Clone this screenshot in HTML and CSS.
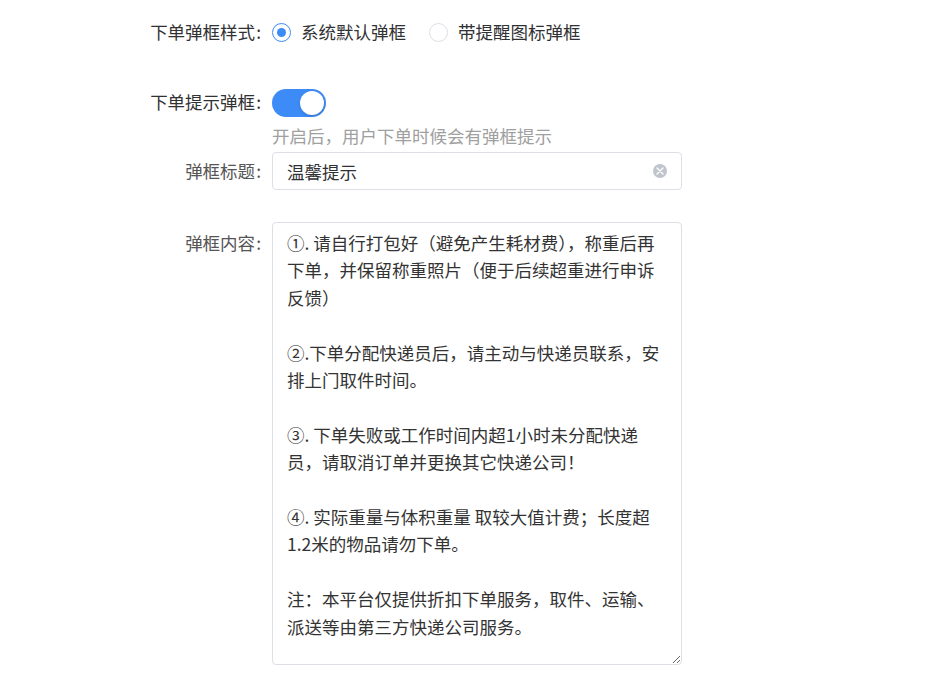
FILE: index.html
```html
<!DOCTYPE html>
<html lang="zh-CN">
<head>
    <meta charset="UTF-8">
    <meta name="viewport" content="width=device-width, initial-scale=1.0">
    <title>下单弹框设置</title>
    <link rel="stylesheet" href="styles.css">
</head>
<body>
    <div class="form">
        <div class="form-item item-style">
            <label class="label">下单弹框样式<span class="colon">:</span></label>
            <div class="content">
                <label class="radio checked"><span class="radio-dot"></span><span class="radio-text">系统默认弹框</span></label>
                <label class="radio"><span class="radio-dot"></span><span class="radio-text">带提醒图标弹框</span></label>
            </div>
        </div>

        <div class="form-item item-switch">
            <label class="label">下单提示弹框<span class="colon">:</span></label>
            <div class="content">
                <div class="switch-row">
                    <span class="switch on"><span class="switch-knob"></span></span>
                </div>
                <div class="tip">开启后，用户下单时候会有弹框提示</div>
            </div>
        </div>

        <div class="form-item item-title">
            <label class="label light">弹框标题<span class="colon">:</span></label>
            <div class="content">
                <div class="input-wrap">
                    <input class="input" type="text" value="温馨提示">
                    <span class="clear-icon">
                        <svg width="8" height="8" viewBox="0 0 8 8"><path d="M1 1L7 7M7 1L1 7" stroke="#fff" stroke-width="1.4" stroke-linecap="round"/></svg>
                    </span>
                </div>
            </div>
        </div>

        <div class="form-item item-body">
            <label class="label light">弹框内容<span class="colon">:</span></label>
            <div class="content">
                <textarea class="textarea">①. 请自行打包好（避免产生耗材费），称重后再
下单，并保留称重照片（便于后续超重进行申诉
反馈）

②.下单分配快递员后，请主动与快递员联系，安
排上门取件时间。

③. 下单失败或工作时间内超1小时未分配快递
员，请取消订单并更换其它快递公司！

④. 实际重量与体积重量 取较大值计费；长度超
1.2米的物品请勿下单。

注：本平台仅提供折扣下单服务，取件、运输、
派送等由第三方快递公司服务。</textarea>
            </div>
        </div>
    </div>
</body>
</html>
```

FILE: styles.css
```css
body {
    margin: 0;
    padding: 0;
    background: #fff;
    font-family: "Noto Sans CJK SC", "Noto Sans", sans-serif;
    font-size: 17.5px;
    color: #303133;
}
.form {
    padding-top: 12px;
}
.form-item {
    display: flex;
    align-items: flex-start;
}
.label {
    width: 272px;
    flex-shrink: 0;
    box-sizing: border-box;
    padding-right: 8px;
    text-align: right;
    line-height: 40px;
    color: #303133;
}
.label.light {
    color: #555;
}
.colon {
    margin-left: 1px;
    margin-right: 3px;
}
.content {
    line-height: 40px;
}

/* 样式单选 */
.item-style {
    margin-bottom: 30px;
}
.radio {
    display: inline-flex;
    align-items: center;
    margin-right: 19px;
    cursor: pointer;
    vertical-align: top;
    height: 40px;
}
.radio-dot {
    width: 19px;
    height: 19px;
    box-sizing: border-box;
    border: 1px solid #dcdfe6;
    border-radius: 50%;
    margin-right: 10px;
    position: relative;
}
.radio.checked .radio-dot {
    border: 1.5px solid #3d8bf7;
}
.radio.checked .radio-dot::after {
    content: "";
    position: absolute;
    left: 50%;
    top: 50%;
    width: 9px;
    height: 9px;
    margin: -4.5px 0 0 -4.5px;
    border-radius: 50%;
    background: #3d8bf7;
}
.radio-text {
    color: #303133;
}

/* 开关 */
.item-switch {
    margin-bottom: 4px;
}
.switch-row {
    height: 40px;
    display: flex;
    align-items: center;
}
.switch {
    display: inline-block;
    width: 54px;
    height: 28px;
    border-radius: 14px;
    background: #dcdfe6;
    position: relative;
    margin-top: 2px;
}
.switch.on {
    background: #3d8bf7;
}
.switch-knob {
    position: absolute;
    top: 2px;
    left: 2px;
    width: 24px;
    height: 24px;
    border-radius: 50%;
    background: #fff;
    box-shadow: 0 1px 3px rgba(0, 0, 0, 0.2);
}
.switch.on .switch-knob {
    left: 28px;
}
.tip {
    margin-top: 2px;
    line-height: 24px;
    color: #a0a0a0;
}

/* 输入框 */
.item-title {
    margin-bottom: 32px;
}
.item-title .label {
    line-height: 38px;
}
.input-wrap {
    position: relative;
    width: 410px;
}
.input {
    display: block;
    width: 100%;
    height: 38px;
    box-sizing: border-box;
    border: 1px solid #dcdfe6;
    border-radius: 4px;
    padding: 0 30px 0 14px;
    font-family: inherit;
    font-size: 17.5px;
    color: #303133;
    outline: none;
}
.clear-icon {
    position: absolute;
    right: 15px;
    top: 12px;
    width: 14px;
    height: 14px;
    border-radius: 50%;
    background: #c0c4cc;
    display: flex;
    align-items: center;
    justify-content: center;
}

/* 文本域 */
.item-body .label {
    line-height: 42px;
}
.textarea {
    display: block;
    width: 410px;
    height: 443px;
    box-sizing: border-box;
    border: 1px solid #dcdfe6;
    border-radius: 4px;
    padding: 6px 10px 6px 14px;
    font-family: inherit;
    font-size: 17.5px;
    line-height: 27.4px;
    color: #333;
    outline: none;
    resize: vertical;
}
```
